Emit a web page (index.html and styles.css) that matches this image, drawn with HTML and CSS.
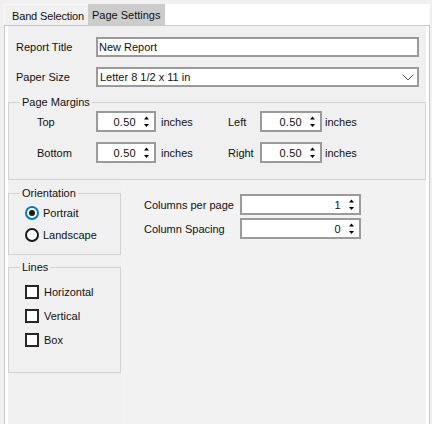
FILE: index.html
```html
<!DOCTYPE html>
<html>
<head>
<meta charset="utf-8">
<title>Page Settings</title>
<link rel="stylesheet" href="styles.css">
</head>
<body>
<div class="tabs">
  <div class="tab">Band Selection</div>
  <div class="tab active">Page Settings</div>
  <div class="tab-fill"></div>
</div>
<div class="panel">
  <div class="content">
    <div class="top">
      <div class="field-row">
        <span class="field-label">Report Title</span>
        <div class="textbox">New Report</div>
      </div>
      <div class="field-row last">
        <span class="field-label">Paper Size</span>
        <div class="textbox select">
          <span class="select-text">Letter 8 1/2 x 11 in</span>
          <svg class="chevron" width="12" height="7" viewBox="0 0 12 7"><polyline points="0.5,0.5 6,6 11.5,0.5" fill="none" stroke="#5a5a5a" stroke-width="1"/></svg>
        </div>
      </div>
      <fieldset class="group margins">
        <legend>Page Margins</legend>
        <div class="margin-grid">
          <span class="m-label">Top</span>
          <div class="spin"><span class="val">0.50</span><span class="arrows"><svg width="5" height="12" viewBox="0 0 5 12"><polygon points="0,3.5 2.5,0.5 5,3.5" fill="#000"/><polygon points="0,8 5,8 2.5,11" fill="#000"/></svg></span></div>
          <span class="unit">inches</span>
          <span class="m-label">Left</span>
          <div class="spin"><span class="val">0.50</span><span class="arrows"><svg width="5" height="12" viewBox="0 0 5 12"><polygon points="0,3.5 2.5,0.5 5,3.5" fill="#000"/><polygon points="0,8 5,8 2.5,11" fill="#000"/></svg></span></div>
          <span class="unit right">inches</span>

          <span class="m-label">Bottom</span>
          <div class="spin"><span class="val">0.50</span><span class="arrows"><svg width="5" height="12" viewBox="0 0 5 12"><polygon points="0,3.5 2.5,0.5 5,3.5" fill="#000"/><polygon points="0,8 5,8 2.5,11" fill="#000"/></svg></span></div>
          <span class="unit">inches</span>
          <span class="m-label">Right</span>
          <div class="spin"><span class="val">0.50</span><span class="arrows"><svg width="5" height="12" viewBox="0 0 5 12"><polygon points="0,3.5 2.5,0.5 5,3.5" fill="#000"/><polygon points="0,8 5,8 2.5,11" fill="#000"/></svg></span></div>
          <span class="unit right">inches</span>
        </div>
      </fieldset>
    </div>
    <div class="bottom">
      <div class="left-col">
        <fieldset class="group orientation">
          <legend>Orientation</legend>
          <div class="options">
            <div class="opt"><span class="radio checked"><span class="dot"></span></span><span>Portrait</span></div>
            <div class="opt"><span class="radio"></span><span>Landscape</span></div>
          </div>
        </fieldset>
        <fieldset class="group lines">
          <legend>Lines</legend>
          <div class="options">
            <div class="opt check-opt"><span class="checkbox"></span><span>Horizontal</span></div>
            <div class="opt check-opt"><span class="checkbox"></span><span>Vertical</span></div>
            <div class="opt check-opt"><span class="checkbox"></span><span>Box</span></div>
          </div>
        </fieldset>
      </div>
      <div class="right-col">
        <div class="col-row">
          <span class="col-label">Columns per page</span>
          <div class="spin wide"><span class="val">1</span><span class="arrows"><svg width="5" height="12" viewBox="0 0 5 12"><polygon points="0,3.5 2.5,0.5 5,3.5" fill="#000"/><polygon points="0,8 5,8 2.5,11" fill="#000"/></svg></span></div>
        </div>
        <div class="col-row">
          <span class="col-label">Column Spacing</span>
          <div class="spin wide"><span class="val">0</span><span class="arrows"><svg width="5" height="12" viewBox="0 0 5 12"><polygon points="0,3.5 2.5,0.5 5,3.5" fill="#000"/><polygon points="0,8 5,8 2.5,11" fill="#000"/></svg></span></div>
        </div>
      </div>
    </div>
  </div>
</div>
</body>
</html>
```

FILE: styles.css
```css
* { box-sizing: border-box; }
html, body { margin: 0; padding: 0; }
body {
  width: 432px;
  height: 424px;
  overflow: hidden;
  background: #f0f0f0;
  font-family: "Liberation Sans", Arial, sans-serif;
  font-size: 11px;
  color: #111;
}

/* Tabs */
.tabs {
  display: flex;
  height: 25px;
  padding: 4px 0 0 4px;
}
.tab {
  height: 21px;
  width: 84px;
  padding: 1px 0 0 7px;
  line-height: 20px;
  background: #f0f0f0;
  border-left: 1px solid #f7f7f7;
  border-top: 1px solid #f7f7f7;
  letter-spacing: -0.15px;
}
.tab.active {
  width: 77px;
  padding-left: 4px;
  background: #cccccc;
  border: 0;
  padding-top: 1px;
  letter-spacing: 0;
}
.tab-fill {
  width: 265px;
  height: 21px;
  background: #fff;
}

/* Panel */
.panel {
  margin-left: 4px;
  width: 426px;
  height: 399px;
  border: 1px solid #c8c8c8;
  border-bottom: 0;
  background: #fff;
  padding: 0 3px;
}
.content {
  height: 100%;
  background: #f0f0f0;
  display: flex;
  flex-direction: column;
}
.top {
  padding-top: 11px;
}
.field-row {
  display: flex;
  align-items: center;
  height: 20px;
  margin-bottom: 10px;
  padding-left: 8px;
}
.field-row.last { margin-bottom: 9px; }
.field-label { width: 80px; }
.textbox {
  width: 323px;
  height: 20px;
  border: 2px solid #9b9b9b;
  background: #fff;
  padding-left: 1px;
  display: flex;
  align-items: center;
}
.select { padding-left: 2px; justify-content: space-between; }
.chevron { margin-right: 3px; margin-top: 1px; }

/* Group boxes */
fieldset.group {
  margin: 0;
  padding: 0;
  min-width: 0;
  border: 1px solid #d2d2d2;
}
fieldset.group legend {
  margin-left: 11px;
  padding: 0 2px;
  line-height: 13px;
}
fieldset.margins { width: 418px; }
.margin-grid {
  display: grid;
  grid-template-columns: 59px 60px 72px 32px 62px auto;
  grid-auto-rows: 21px;
  row-gap: 10px;
  align-items: center;
  padding: 2px 0 16px 28px;
}
.unit { padding-left: 5px; }
.unit.right { padding-left: 3px; }

/* Spinner */
.spin {
  display: flex;
  align-items: center;
  height: 21px;
  border: 2px solid #9b9b9b;
  background: #fff;
}
.spin .val {
  flex: 1;
  text-align: right;
  padding-right: 3px;
  letter-spacing: 0.3px;
}
.spin .arrows {
  width: 15px;
  display: flex;
  justify-content: center;
  align-items: center;
}
.spin .arrows svg { display: block; }
.spin.wide { width: 121px; }

/* Bottom area */
.bottom {
  flex: 1;
  display: flex;
}
.left-col {
  width: 113px;
  background: #f0f0f0;
  padding-top: 7px;
}
.right-col {
  flex: 1;
  background: #f2f2f2;
  padding: 14px 0 0 23px;
}
fieldset.orientation { width: 113px; }
.orientation .options { padding: 2px 0 8px 16px; }
fieldset.lines { width: 113px; margin-top: 6px; }
.lines .options { padding: 6px 0 20px 16px; }
.opt {
  display: flex;
  align-items: center;
  height: 22px;
  gap: 4px;
}
.check-opt { height: 24px; gap: 5px; }
.radio {
  width: 14px;
  height: 14px;
  border-radius: 50%;
  border: 2px solid #1a1a1a;
  background: #fff;
  display: flex;
  align-items: center;
  justify-content: center;
}
.radio.checked { border-color: #0078d7; }
.radio .dot {
  width: 6px;
  height: 6px;
  border-radius: 50%;
  background: #1a1a1a;
}
.checkbox {
  width: 14px;
  height: 14px;
  border: 2px solid #262626;
  background: #fff;
}
.col-row {
  display: flex;
  align-items: center;
  height: 21px;
  margin-bottom: 3px;
}
.col-label { width: 96px; }
```
